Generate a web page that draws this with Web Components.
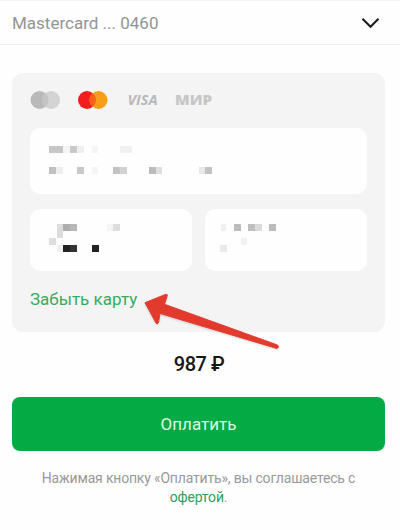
<!DOCTYPE html>
<html lang="ru">
<head>
<meta charset="utf-8">
<title>Оплата</title>
<style>
    body {
        margin: 0;
        background: #fefefe;
        font-family: Roboto, "Liberation Sans", sans-serif;
    }
</style>
</head>
<body>
<pay-page>
    <pay-method slot="method">Mastercard ... 0460</pay-method>
    <pay-card>
        <card-brands slot="brands"></card-brands>
        <masked-field slot="number" height="66" cells="19,18,14,c6c6c6 33,18,7,f5f5f5 40,18,7,cacaca 47,18,7,efefef 62,18,6,f5f5f5 90,18,12,f1f1f1 19,39,7,c0c0c0 26,39,7,eeeeee 47,39,7,c8c8c8 62,39,6,f5f5f5 83,39,7,c3c3c3 90,39,7,d2d2d2 119,39,7,bcbcbc 126,39,6,dfdfdf 169,39,6,e8e8e8 175,39,7,c2c2c2"></masked-field>
        <masked-field slot="date" height="62" cells="27,15,6,dcdcdc 33,15,7,adadad 40,15,7,b7b7b7 77,15,6,f5f5f5 83,15,7,dddddd 27,22,6,dcdcdc 19,29,7,dddddd 27,36,6,f0f0f0 33,36,7,222222 40,36,7,333333 62,36,7,222222"></masked-field>
        <masked-field slot="code" height="62" cells="16,15,5,f0f0f0 29,15,7,bcbcbc 43,15,7,bfbfbf 50,15,7,dbdbdb 64,15,7,bcbcbc 36,29,6,f1f1f1 15,36,7,eaeaea"></masked-field>
        <span slot="forget">Забыть карту</span>
    </pay-card>
    <pay-total>987 ₽</pay-total>
    <pay-button>Оплатить</pay-button>
    <pay-note>Нажимая кнопку «Оплатить», вы соглашаетесь с <span slot="link">офертой</span></pay-note>
    <pointer-arrow slot="arrow"></pointer-arrow>
</pay-page>

<script>
class PayPage extends HTMLElement {
    constructor() {
        super();
        this.attachShadow({ mode: 'open' });
    }

    connectedCallback() {
        this.shadowRoot.innerHTML = `
        <style>
            :host {
                display: block;
                position: relative;
                height: 530px;
                overflow: hidden;
            }

            main {
                display: flex;
                flex-direction: column;
                padding: 28px 15px 0 12px;
            }
        </style>
        <slot name="method"></slot>
        <main><slot></slot></main>
        <slot name="arrow"></slot>
        `;
    }
}

class PayMethod extends HTMLElement {
    constructor() {
        super();
        this.attachShadow({ mode: 'open' });
    }

    connectedCallback() {
        this.shadowRoot.innerHTML = `
        <style>
            :host {
                display: flex;
                box-sizing: border-box;
                height: 45px;
                align-items: center;
                justify-content: space-between;
                padding: 1px 20px 0 12px;
                border-top: 1px solid #f3f3f3;
                border-bottom: 1px solid #f0f0f0;
                color: #949494;
                font-size: 17px;
            }
        </style>
        <slot></slot>
        <svg width="19" height="12" viewBox="0 0 19 12" fill="none" stroke="#1c1c1c" stroke-width="2.1">
            <path d="M1.5 1.7 9.5 9.7 17.5 1.7"/>
        </svg>
        `;
    }
}

class PayCard extends HTMLElement {
    constructor() {
        super();
        this.attachShadow({ mode: 'open' });
    }

    connectedCallback() {
        this.shadowRoot.innerHTML = `
        <style>
            :host {
                display: flex;
                flex-direction: column;
                box-sizing: border-box;
                height: 259px;
                padding: 17px 18px 0;
                border-radius: 11px;
                background: #f4f4f4;
            }

            .row {
                display: grid;
                grid-template-columns: 162px 162px;
                gap: 13px;
                margin-top: 15px;
            }

            .forget {
                margin-top: 18px;
                color: #35ac61;
                font-size: 17px;
                line-height: 20px;
            }
        </style>
        <slot name="brands"></slot>
        <slot name="number"></slot>
        <div class="row">
            <slot name="date"></slot>
            <slot name="code"></slot>
        </div>
        <div class="forget"><slot name="forget"></slot></div>
        `;
    }
}

class CardBrands extends HTMLElement {
    constructor() {
        super();
        this.attachShadow({ mode: 'open' });
    }

    connectedCallback() {
        this.shadowRoot.innerHTML = `
        <style>
            :host {
                display: block;
                height: 38px;
            }

            svg {
                display: block;
                font-family: "Open Sans", "Liberation Sans", sans-serif;
                font-weight: 700;
                fill: #b8b8b8;
            }

            .mir {
                font-weight: 800;
                fill: #c6c6c6;
            }
        </style>
        <svg width="190" height="20" viewBox="0 0 190 20">
            <circle cx="9.5" cy="10" r="9" fill="#b9b9b9"/>
            <circle cx="21" cy="10" r="9" fill="#d3d3d3"/>
            <path d="M15.25 3.1a9 9 0 0 1 0 13.8a9 9 0 0 1 0-13.8z" fill="#c4c4c4"/>
            <circle cx="57" cy="10" r="9" fill="#f21d1d"/>
            <circle cx="68.5" cy="10" r="9" fill="#f99d1c"/>
            <path d="M62.75 3.1a9 9 0 0 1 0 13.8a9 9 0 0 1 0-13.8z" fill="#fb6218"/>
            <text x="97.5" y="14.5" font-size="13.5" font-style="italic" textLength="30" lengthAdjust="spacingAndGlyphs">VISA</text>
            <text class="mir" x="145" y="14.5" font-size="14" textLength="37" lengthAdjust="spacingAndGlyphs">МИР</text>
        </svg>
        `;
    }
}

// White input whose value is hidden behind a mosaic.
// cells: "x,y,width,color" items separated by spaces
class MaskedField extends HTMLElement {
    static get observedAttributes() {
        return ['height', 'cells'];
    }

    constructor() {
        super();
        this.attachShadow({ mode: 'open' });
    }

    connectedCallback() {
        const rects = (this.cells || "").split(" ").map((cell) => {
            const [x, y, width, color] = cell.split(",");
            return `<rect x="${x}" y="${y}" width="${width}" height="7" fill="#${color}"/>`;
        }).join("");

        this.shadowRoot.innerHTML = `
        <style>
            :host {
                display: block;
                height: ${this.height || "62"}px;
                border-radius: 10px;
                background: #fefefe;
            }

            svg {
                display: block;
                width: 100%;
                height: 100%;
            }
        </style>
        <svg>${rects}</svg>
        `;
    }

    attributeChangedCallback(name, oldValue, newValue) {
        this[name] = newValue;
    }
}

class PayTotal extends HTMLElement {
    constructor() {
        super();
        this.attachShadow({ mode: 'open' });
    }

    connectedCallback() {
        this.shadowRoot.innerHTML = `
        <style>
            :host {
                display: block;
                padding: 20px 0 0 1px;
                color: #161616;
                font-size: 20px;
                font-weight: 500;
                letter-spacing: -0.5px;
                line-height: 24px;
                text-align: center;
            }
        </style>
        <slot></slot>
        `;
    }
}

class PayButton extends HTMLElement {
    constructor() {
        super();
        this.attachShadow({ mode: 'open' });
    }

    connectedCallback() {
        this.shadowRoot.innerHTML = `
        <style>
            :host {
                display: flex;
                height: 54px;
                margin-top: 21px;
            }

            button {
                flex: 1;
                border: 0;
                border-radius: 8px;
                padding: 0;
                background: #04ab44;
                color: #dcf8e5;
                font: 400 17px Roboto, "Liberation Sans", sans-serif;
            }
        </style>
        <button><slot></slot></button>
        `;
    }
}

class PayNote extends HTMLElement {
    constructor() {
        super();
        this.attachShadow({ mode: 'open' });
    }

    connectedCallback() {
        this.shadowRoot.innerHTML = `
        <style>
            :host {
                display: block;
                padding-top: 18px;
                color: #999;
                font-size: 14px;
                letter-spacing: -0.18px;
                line-height: 18.5px;
                text-align: center;
            }

            .link {
                color: #2f9e5b;
            }
        </style>
        <div><slot></slot></div>
        <div><span class="link"><slot name="link"></slot></span>.</div>
        `;
    }
}

class PointerArrow extends HTMLElement {
    constructor() {
        super();
        this.attachShadow({ mode: 'open' });
    }

    connectedCallback() {
        this.shadowRoot.innerHTML = `
        <style>
            :host {
                position: absolute;
                left: 140px;
                top: 290px;
                filter: drop-shadow(0 1px 1px rgba(0, 0, 0, 0.15));
            }

            svg {
                display: block;
            }
        </style>
        <svg width="145" height="64" viewBox="0 0 145 64">
            <path d="M5 12.7 26 4.2Q28 4.2 27 6.5L24.5 14.3 137.5 55Q139.5 57.5 137 58.5L20 23.5 18.5 32.5Q17.5 35 16 33Z" fill="#e23b2e" stroke="#e23b2e" stroke-linejoin="round"/>
        </svg>
        `;
    }
}

customElements.define('pay-page', PayPage);
customElements.define('pay-method', PayMethod);
customElements.define('card-brands', CardBrands);
customElements.define('masked-field', MaskedField);
customElements.define('pay-card', PayCard);
customElements.define('pay-total', PayTotal);
customElements.define('pay-button', PayButton);
customElements.define('pay-note', PayNote);
customElements.define('pointer-arrow', PointerArrow);
</script>
</body>
</html>
